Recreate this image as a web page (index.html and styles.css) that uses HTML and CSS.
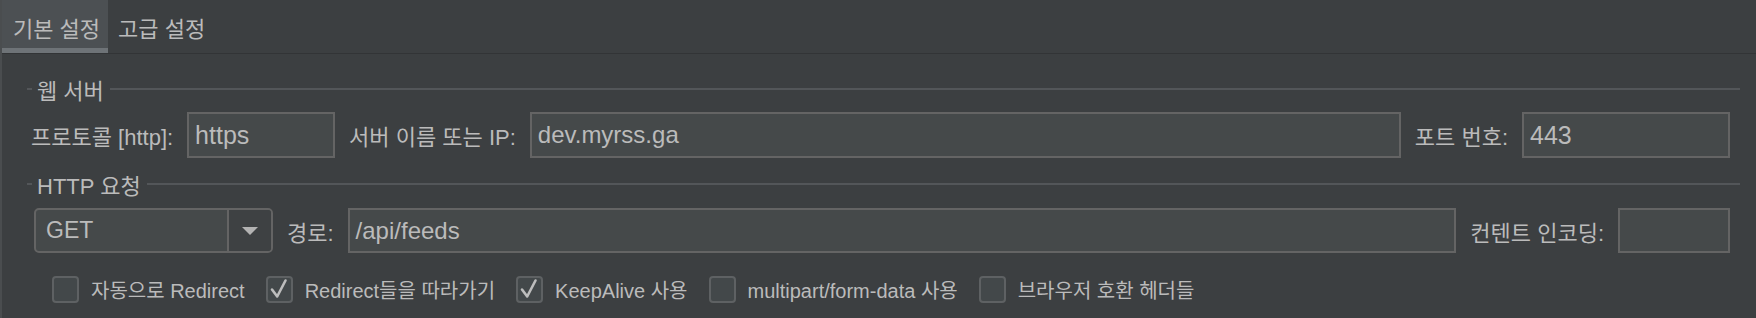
FILE: index.html
```html
<!DOCTYPE html>
<html lang="ko">
<head>
<meta charset="utf-8">
<title>HTTP 요청</title>
<link rel="stylesheet" href="styles.css">
</head>
<body>
<div class="window">
  <div class="tabbar">
    <div class="tab active">기본 설정</div>
    <div class="tab second">고급 설정</div>
  </div>
  <div class="content">
    <div class="group-title">
      <span class="dash"></span><span class="title-text">웹 서버</span><span class="rule"></span>
    </div>
    <div class="row row-server">
      <span class="label">프로토콜 [http]:</span>
      <div class="field field-protocol">https</div>
      <span class="label">서버 이름 또는 IP:</span>
      <div class="field field-grow">dev.myrss.ga</div>
      <span class="label">포트 번호:</span>
      <div class="field field-port">443</div>
    </div>

    <div class="group-title second-title">
      <span class="dash"></span><span class="title-text">HTTP 요청</span><span class="rule"></span>
    </div>
    <div class="row row-request">
      <div class="select">
        <div class="select-value">GET</div>
        <div class="select-btn">
          <svg width="16" height="8" viewBox="0 0 16 8"><path d="M0 0 H16 L8 8 Z" fill="#b3b3b3"/></svg>
        </div>
      </div>
      <span class="label">경로:</span>
      <div class="field field-grow">/api/feeds</div>
      <span class="label">컨텐트 인코딩:</span>
      <div class="field field-enc"></div>
    </div>

    <div class="checks">
      <label class="check"><span class="box"></span><span class="clabel">자동으로 Redirect</span></label>
      <label class="check"><span class="box"><svg width="27" height="27" viewBox="0 0 27 27"><path d="M6 13.5 L11.2 20.5 L19.5 4.5" fill="none" stroke="#bdbdbd" stroke-width="2.6" stroke-linecap="round" stroke-linejoin="round"/></svg></span><span class="clabel">Redirect들을 따라가기</span></label>
      <label class="check"><span class="box"><svg width="27" height="27" viewBox="0 0 27 27"><path d="M6 13.5 L11.2 20.5 L19.5 4.5" fill="none" stroke="#bdbdbd" stroke-width="2.6" stroke-linecap="round" stroke-linejoin="round"/></svg></span><span class="clabel">KeepAlive 사용</span></label>
      <label class="check"><span class="box"></span><span class="clabel">multipart/form-data 사용</span></label>
      <label class="check"><span class="box"></span><span class="clabel">브라우저 호환 헤더들</span></label>
    </div>
  </div>
</div>
</body>
</html>
```

FILE: styles.css
```css
* { box-sizing: border-box; }

html, body {
  margin: 0;
  padding: 0;
  background: #3c3f41;
}

body {
  width: 1756px;
  height: 318px;
  overflow: hidden;
  font-family: "Liberation Sans", "Noto Sans CJK KR", sans-serif;
  font-size: 22px;
  color: #bbbbbb;
}

.window {
  height: 318px;
  border-left: 2px solid #4a4d4f;
}

.tabbar {
  display: flex;
  height: 54px;
  border-bottom: 1px solid #323436;
}

.tab {
  display: flex;
  align-items: center;
  height: 53px;
  padding: 0 8px 0 11px;
  white-space: nowrap;
  font-size: 22px;
}

.tab.active {
  background: #4c5053;
  box-shadow: inset 0 -5px 0 #6e7377;
}

.tab.second {
  padding-left: 10px;
}

.content {
  padding: 24px 16px 0 25px;
}

.group-title {
  display: flex;
  align-items: center;
  height: 22px;
  font-size: 22px;
}

.second-title {
  margin-top: 15px;
}

.dash {
  width: 5px;
  height: 2px;
  background: #535659;
  margin-right: 5px;
}

.rule {
  flex: 1;
  height: 2px;
  background: #535659;
  margin-left: 6px;
}

.title-text {
  white-space: nowrap;
}

.row {
  display: flex;
  align-items: center;
  gap: 14px;
  margin-top: 12px;
  padding-right: 10px;
}

.row-server {
  height: 46px;
  padding-left: 4px;
}

.row-request {
  height: 45px;
  padding-left: 7px;
  margin-top: 13px;
}

.label {
  white-space: nowrap;
  font-size: 22px;
}

.field {
  height: 100%;
  display: flex;
  align-items: center;
  background: #45494a;
  border: 2px solid #646464;
  padding: 0 6px;
  font-size: 24px;
  color: #bbbbbb;
  white-space: nowrap;
}

.field-protocol { width: 148px; font-size: 25px; }
.field-port { width: 208px; font-size: 25px; }
.field-enc { width: 112px; }
.field-grow { flex: 1; }

.select {
  width: 239px;
  height: 100%;
  display: flex;
  border: 2px solid #646464;
  border-radius: 5px;
  background: #45494a;
  overflow: hidden;
}

.select-value {
  flex: 1;
  display: flex;
  align-items: center;
  padding-left: 10px;
  font-size: 23px;
}

.select-btn {
  width: 44px;
  border-left: 2px solid #646464;
  background: #3e4143;
  display: flex;
  align-items: center;
  justify-content: center;
}

.checks {
  display: flex;
  align-items: center;
  gap: 21px;
  margin-top: 23px;
  padding-left: 25px;
  height: 27px;
  font-size: 20px;
}

.check {
  display: flex;
  align-items: center;
  gap: 12px;
}

.box {
  width: 27px;
  height: 27px;
  border: 2px solid #5e6163;
  border-radius: 4px;
  background: #43484a;
  display: flex;
  align-items: center;
  justify-content: center;
}

.box svg {
  display: block;
  margin: -2px;
}

.clabel {
  white-space: nowrap;
}
```
